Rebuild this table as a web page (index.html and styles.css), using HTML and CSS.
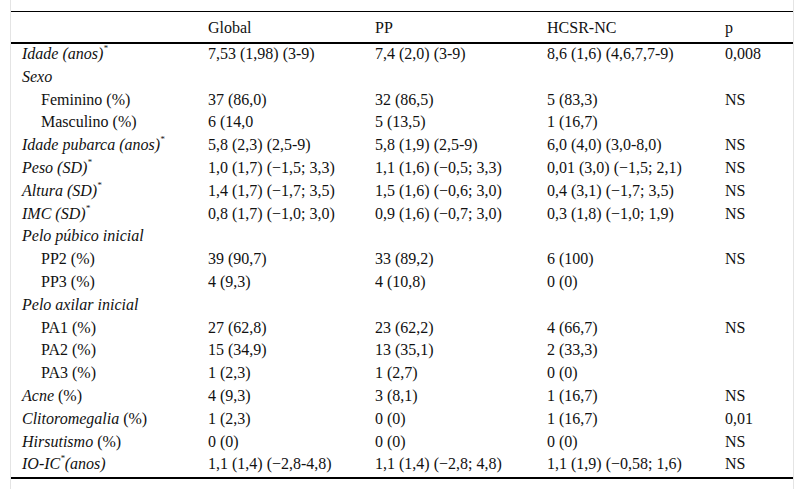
FILE: index.html
```html
<!DOCTYPE html>
<html lang="pt">
<head>
<meta charset="utf-8">
<title>Tabela</title>
<link rel="stylesheet" href="styles.css">
</head>
<body>
<div class="wrap">
<table class="data">
<colgroup>
<col class="c1"><col class="c2"><col class="c3"><col class="c4"><col class="c5">
</colgroup>
<thead>
<tr><th></th><th>Global</th><th>PP</th><th>HCSR-NC</th><th>p</th></tr>
</thead>
<tbody>
<tr><td class="lab">Idade (anos)<sup>*</sup></td><td>7,53 (1,98) (3-9)</td><td>7,4 (2,0) (3-9)</td><td>8,6 (1,6) (4,6,7,7-9)</td><td>0,008</td></tr>
<tr><td class="lab">Sexo</td><td></td><td></td><td></td><td></td></tr>
<tr><td class="sub">Feminino (%)</td><td>37 (86,0)</td><td>32 (86,5)</td><td>5 (83,3)</td><td>NS</td></tr>
<tr><td class="sub">Masculino (%)</td><td>6 (14,0</td><td>5 (13,5)</td><td>1 (16,7)</td><td></td></tr>
<tr><td class="lab">Idade pubarca (anos)<sup>*</sup></td><td>5,8 (2,3) (2,5-9)</td><td>5,8 (1,9) (2,5-9)</td><td>6,0 (4,0) (3,0-8,0)</td><td>NS</td></tr>
<tr><td class="lab">Peso (SD)<sup>*</sup></td><td>1,0 (1,7) (−1,5; 3,3)</td><td>1,1 (1,6) (−0,5; 3,3)</td><td>0,01 (3,0) (−1,5; 2,1)</td><td>NS</td></tr>
<tr><td class="lab">Altura (SD)<sup>*</sup></td><td>1,4 (1,7) (−1,7; 3,5)</td><td>1,5 (1,6) (−0,6; 3,0)</td><td>0,4 (3,1) (−1,7; 3,5)</td><td>NS</td></tr>
<tr><td class="lab">IMC (SD)<sup>*</sup></td><td>0,8 (1,7) (−1,0; 3,0)</td><td>0,9 (1,6) (−0,7; 3,0)</td><td>0,3 (1,8) (−1,0; 1,9)</td><td>NS</td></tr>
<tr><td class="lab">Pelo púbico inicial</td><td></td><td></td><td></td><td></td></tr>
<tr><td class="sub">PP2 (%)</td><td>39 (90,7)</td><td>33 (89,2)</td><td>6 (100)</td><td>NS</td></tr>
<tr><td class="sub">PP3 (%)</td><td>4 (9,3)</td><td>4 (10,8)</td><td>0 (0)</td><td></td></tr>
<tr><td class="lab">Pelo axilar inicial</td><td></td><td></td><td></td><td></td></tr>
<tr><td class="sub">PA1 (%)</td><td>27 (62,8)</td><td>23 (62,2)</td><td>4 (66,7)</td><td>NS</td></tr>
<tr><td class="sub">PA2 (%)</td><td>15 (34,9)</td><td>13 (35,1)</td><td>2 (33,3)</td><td></td></tr>
<tr><td class="sub">PA3 (%)</td><td>1 (2,3)</td><td>1 (2,7)</td><td>0 (0)</td><td></td></tr>
<tr><td class="lab">Acne <span class="up">(%)</span></td><td>4 (9,3)</td><td>3 (8,1)</td><td>1 (16,7)</td><td>NS</td></tr>
<tr><td class="lab">Clitoromegalia <span class="up">(%)</span></td><td>1 (2,3)</td><td>0 (0)</td><td>1 (16,7)</td><td>0,01</td></tr>
<tr><td class="lab">Hirsutismo <span class="up">(%)</span></td><td>0 (0)</td><td>0 (0)</td><td>0 (0)</td><td>NS</td></tr>
<tr><td class="lab">IO-IC<sup>*</sup>(anos)</td><td>1,1 (1,4) (−2,8-4,8)</td><td>1,1 (1,4) (−2,8; 4,8)</td><td>1,1 (1,9) (−0,58; 1,6)</td><td>NS</td></tr>
</tbody>
</table>
</div>
</body>
</html>
```

FILE: styles.css
```css
html, body {
  margin: 0;
  padding: 0;
  background: #fff;
}
body {
  font-family: "Liberation Serif", "Times New Roman", serif;
  font-size: 16px;
  color: #111;
}
.wrap {
  margin: 0 10px;
  padding-top: 11px;
  height: 489px;
  box-sizing: border-box;
  border-left: 1px solid #e4e4e4;
  border-right: 1px solid #e4e4e4;
}
.data {
  width: 100%;
  border-collapse: collapse;
  table-layout: fixed;
  border-top: 1px solid #000;
  border-bottom: 2px solid #000;
  font-size: 16px;
}
.c1 { width: 186px; }
.c2 { width: 167px; }
.c3 { width: 172px; }
.c4 { width: 178px; }
.c5 { width: auto; }
.data th {
  font-weight: normal;
  text-align: left;
  padding: 7px 11px 6px;
  line-height: 17px;
  border-bottom: 2px solid #000;
  white-space: nowrap;
}
.data td {
  padding: 2px 11px 4px;
  line-height: 16.8px;
  white-space: nowrap;
  vertical-align: top;
}
.lab {
  font-style: italic;
}
.data td.sub {
  padding-left: 30px;
}
.up {
  font-style: normal;
}
sup {
  font-size: 9px;
  line-height: 0;
  vertical-align: 8px;
}
```
